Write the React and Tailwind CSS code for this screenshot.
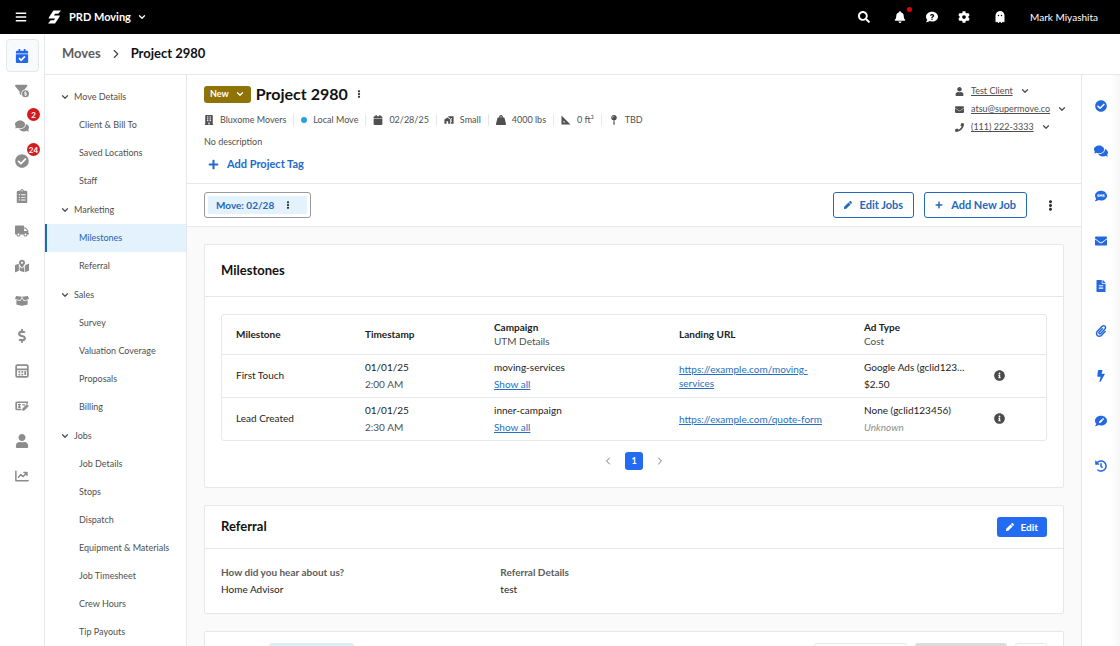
import clsx from 'clsx';
import {
  FaBars,
  FaBell,
  FaBolt,
  FaBoxOpen,
  FaBuilding,
  FaCalendar,
  FaCalendarCheck,
  FaCheckCircle,
  FaClipboardList,
  FaCog,
  FaComment,
  FaComments,
  FaDollarSign,
  FaEllipsisV,
  FaEnvelope,
  FaFileAlt,
  FaGhost,
  FaHistory,
  FaInfoCircle,
  FaMapMarkedAlt,
  FaMapPin,
  FaPaperclip,
  FaPen,
  FaPhone,
  FaPlus,
  FaQuestion,
  FaSearch,
  FaTruck,
  FaUser,
  FaWeightHanging,
} from 'react-icons/fa';
import { FaCommentSms, FaFilterCircleDollar } from 'react-icons/fa6';
import { FiChevronDown, FiChevronLeft, FiChevronRight } from 'react-icons/fi';
import { MdHomeWork } from 'react-icons/md';

function Logo() {
  return (
    <svg viewBox="0 0 24 26" className="h-[14px] w-[13px]" fill="currentColor" aria-hidden="true">
      <path d="M10 1h14l-5 6h-6l-2 3h11l-1 3-8 12H0l5-6h6l2-3H1l1-3z" />
    </svg>
  );
}

function CalculatorIcon({ className }) {
  return (
    <svg viewBox="0 0 24 24" className={className} fill="none" stroke="currentColor" strokeWidth="3" aria-hidden="true">
      <rect x="2" y="2" width="20" height="20" rx="2" />
      <path d="M2 9h20M6 13.5h3M11 13.5h3M6 18h3M11 18h3M17.5 12v7" />
    </svg>
  );
}

function MoneyCheckEditIcon({ className }) {
  return (
    <svg viewBox="0 0 24 20" className={className} fill="none" stroke="currentColor" strokeWidth="2.8" aria-hidden="true">
      <path d="M11 16H3.5A1.5 1.5 0 0 1 2 14.5V5A1.5 1.5 0 0 1 3.5 3.5H21V6" />
      <path d="M5 7.5h5M5 12h5M7.5 6v8M12.500 8h5" strokeWidth="2.2" />
      <path d="M13 17.5l.8-3.500L20.5 7.5l2.5 2.5-6.5 6.700z" fill="currentColor" strokeWidth="1.4" />
    </svg>
  );
}

function ChartIcon({ className }) {
  return (
    <svg viewBox="0 0 24 20" className={className} fill="none" stroke="currentColor" strokeWidth="2.6" strokeLinecap="round" strokeLinejoin="round" aria-hidden="true">
      <path d="M1.5 2v16h21" />
      <path d="M6 12l4-4.5 4 3.5 5.5-6M15.500 4h5v5" />
    </svg>
  );
}

function SetSquareIcon({ className }) {
  return (
    <svg viewBox="0 0 20 20" className={className} fill="currentColor" fillRule="evenodd" aria-hidden="true">
      <path d="M1 1l18 18H1zM5 11v4h4z" />
    </svg>
  );
}

function HelpIcon({ className }) {
  return (
    <span className={clsx('relative flex items-center justify-center', className)}>
      <FaComment className="size-full" />
      <FaQuestion className="absolute size-[6px] text-black" />
    </span>
  );
}

function CommentPenIcon({ className }) {
  return (
    <span className={clsx('relative flex items-center justify-center', className)}>
      <FaComment className="size-full" />
      <FaPen className="absolute size-[5px] text-white" />
    </span>
  );
}

const RAIL_ITEMS = [
  { label: 'Leads', icon: FaFilterCircleDollar },
  { label: 'Messages', icon: FaComments, badge: 2 },
  { label: 'Tasks', icon: FaCheckCircle, badge: 24 },
  { label: 'Estimates', icon: FaClipboardList },
  { label: 'Dispatch', icon: FaTruck },
  { label: 'Map', icon: FaMapMarkedAlt },
  { label: 'Storage', icon: FaBoxOpen },
  { label: 'Payments', icon: FaDollarSign },
  { label: 'Accounting', icon: CalculatorIcon },
  { label: 'Payroll', icon: MoneyCheckEditIcon },
  { label: 'Customers', icon: FaUser },
  { label: 'Reports', icon: ChartIcon },
];

const NAV_GROUPS = [
  { title: 'Move Details', items: ['Client & Bill To', 'Saved Locations', 'Staff'] },
  { title: 'Marketing', items: ['Milestones', 'Referral'] },
  { title: 'Sales', items: ['Survey', 'Valuation Coverage', 'Proposals', 'Billing'] },
  {
    title: 'Jobs',
    items: ['Job Details', 'Stops', 'Dispatch', 'Equipment & Materials', 'Job Timesheet', 'Crew Hours', 'Tip Payouts'],
  },
];

const FACTS = [
  { icon: FaBuilding, text: 'Bluxome Movers' },
  { text: 'Local Move' },
  { icon: FaCalendar, text: '02/28/25' },
  { icon: MdHomeWork, text: 'Small' },
  { icon: FaWeightHanging, text: '4000 lbs' },
  { icon: SetSquareIcon, text: '0 ft³' },
  { icon: FaMapPin, text: 'TBD' },
];

const CONTACTS = [
  { icon: FaUser, text: 'Test Client' },
  { icon: FaEnvelope, text: 'atsu@supermove.co' },
  { icon: FaPhone, text: '(111) 222-3333' },
];

const TOOLS = [
  { label: 'Tasks', icon: FaCheckCircle },
  { label: 'Conversations', icon: FaComments },
  { label: 'Text messages', icon: FaCommentSms },
  { label: 'Emails', icon: FaEnvelope },
  { label: 'Documents', icon: FaFileAlt },
  { label: 'Attachments', icon: FaPaperclip },
  { label: 'Automations', icon: FaBolt },
  { label: 'Notes', icon: CommentPenIcon },
  { label: 'History', icon: FaHistory },
];

const MILESTONES = [
  {
    name: 'First Touch',
    date: '01/01/25',
    time: '2:00 AM',
    campaign: 'moving-services',
    url: 'https://example.com/moving-services',
    adType: 'Google Ads (gclid123…',
    cost: '$2.50',
  },
  {
    name: 'Lead Created',
    date: '01/01/25',
    time: '2:30 AM',
    campaign: 'inner-campaign',
    url: 'https://example.com/quote-form',
    adType: 'None (gclid123456)',
    cost: null,
  },
];

function TopBar() {
  return (
    <header className="flex h-[34px] shrink-0 items-center bg-black pr-[22px] pl-[15px] text-white">
      <button aria-label="Menu">
        <FaBars className="size-3" />
      </button>
      <div className="ml-[21px] flex items-center gap-2">
        <Logo />
        <button className="flex items-center gap-1.5 text-[11px] font-bold">
          PRD Moving
          <FiChevronDown className="size-2.5" strokeWidth={3} />
        </button>
      </div>
      <div className="ml-auto flex items-center gap-5">
        <button aria-label="Search" className="mr-1">
          <FaSearch className="size-3" />
        </button>
        <button aria-label="Notifications" className="relative">
          <FaBell className="size-3" />
          <span className="absolute -top-1 -right-1.5 size-[5px] rounded-full bg-red-600" />
        </button>
        <button aria-label="Help">
          <HelpIcon className="size-3" />
        </button>
        <button aria-label="Settings">
          <FaCog className="size-3" />
        </button>
        <button aria-label="Updates" className="mx-1">
          <FaGhost className="size-3" />
        </button>
        <button className="text-[10px]">Mark Miyashita</button>
      </div>
    </header>
  );
}

function IconRail() {
  return (
    <nav aria-label="Main" className="flex w-[45px] shrink-0 flex-col items-center border-r border-gray-200 pt-1">
      <div className="flex h-[35px] items-center">
        <a
          href="#moves"
          aria-label="Moves"
          className="flex size-[33px] items-center justify-center rounded-sm border border-gray-200 bg-gray-50 text-[#2368e8]"
        >
          <FaCalendarCheck className="size-3.5" />
        </a>
      </div>
      {RAIL_ITEMS.map(({ label, icon: Icon, badge }) => (
        <a
          key={label}
          href="#rail"
          aria-label={label}
          className="relative flex h-[35px] w-full items-center justify-center text-[#8c8c8c]"
        >
          <Icon className="size-3.5" />
          {badge && (
            <span className="absolute top-0 right-1 flex h-[13px] min-w-[13px] items-center justify-center rounded-full bg-[#d31a1f] text-[8px] font-bold text-white">
              {badge}
            </span>
          )}
        </a>
      ))}
    </nav>
  );
}

function SideNav() {
  return (
    <nav
      aria-label="Project sections"
      className="w-[142px] shrink-0 space-y-px overflow-hidden border-r border-gray-200 pt-2 text-[9px] text-[#4f4f4f]"
    >
      {NAV_GROUPS.map((group) => (
        <div key={group.title}>
          <button className="flex h-7 w-full items-center gap-1 pl-[15px]">
            <FiChevronDown className="size-2.5" strokeWidth={3} />
            {group.title}
          </button>
          {group.items.map((item) => (
            <a
              key={item}
              href="#section"
              className={clsx(
                'flex h-7 items-center border-l-2 pl-8',
                item === 'Milestones'
                  ? 'border-[#1f68c0] bg-[#e3f2fd] text-[#1f62b0]'
                  : 'border-transparent'
              )}
            >
              {item}
            </a>
          ))}
        </div>
      ))}
    </nav>
  );
}

function ProjectHeader() {
  return (
    <section className="flex justify-between border-b border-gray-200 bg-white px-[17px] pt-[7px] pb-[5px]">
      <div>
        <div className="flex h-6 items-center gap-[5px]">
          <button className="flex h-[17px] items-center gap-1.5 rounded-[3px] bg-[#8f7306] px-1.5 text-[9px] font-bold text-white">
            New
            <FiChevronDown className="size-2.5" strokeWidth={3} />
          </button>
          <h1 className="text-base font-bold text-[#111]">Project 2980</h1>
          <button aria-label="Project actions" className="px-0.5">
            <FaEllipsisV className="size-2 text-[#333]" />
          </button>
        </div>
        <ul className="flex h-7 items-center divide-x divide-gray-200 text-[9px] text-[#4f4f4f]">
          {FACTS.map(({ icon: Icon, text }) => (
            <li key={text} className="flex h-3 items-center gap-1.5 px-[7px] first:pl-0">
              {Icon ? (
                <Icon className="size-2.5" />
              ) : (
                <span className="size-1.5 rounded-full bg-[#2a9fe0]" />
              )}
              {text}
            </li>
          ))}
        </ul>
        <p className="h-4 text-[9px] leading-4 text-[#4f4f4f]">No description</p>
        <button className="flex h-7 items-center gap-2 pl-1 text-[11px] font-bold text-[#2468cc]">
          <FaPlus className="size-[11px]" />
          Add Project Tag
        </button>
      </div>
      <ul className="w-[109px] text-[9px] text-[#4f4f4f]">
        {CONTACTS.map(({ icon: Icon, text }) => (
          <li key={text} className="flex h-[18px] items-center gap-[7px]">
            <Icon className="size-[9px] shrink-0" />
            <a href="#contact" className="underline">
              {text}
            </a>
            <FiChevronDown className="size-2.5 shrink-0" strokeWidth={3} />
          </li>
        ))}
      </ul>
    </section>
  );
}

function JobBar() {
  return (
    <section className="flex h-[43px] shrink-0 items-center border-b border-gray-200 bg-white px-[17px]">
      <div className="flex h-[26px] w-[107px] rounded-[3px] border border-[#9a9a9a] p-[3px]">
        <div className="flex flex-1 items-center gap-2.5 bg-[#e3f2fd] pl-2">
          <button className="text-[10px] font-bold text-[#2468b8]">Move: 02/28</button>
          <button aria-label="Move actions">
            <FaEllipsisV className="size-2 text-[#333]" />
          </button>
        </div>
      </div>
      <div className="ml-auto flex items-center gap-2.5 text-[11px] font-bold text-[#2468b8]">
        <button className="flex h-[26px] items-center gap-2 rounded-[3px] border border-[#2468b8] px-2.5">
          <FaPen className="size-2" />
          Edit Jobs
        </button>
        <button className="flex h-[26px] items-center gap-2 rounded-[3px] border border-[#2468b8] px-2.5">
          <FaPlus className="size-2" />
          Add New Job
        </button>
        <button aria-label="More actions" className="px-2">
          <FaEllipsisV className="size-[11px] text-[#333]" />
        </button>
      </div>
    </section>
  );
}

function MilestonesCard() {
  return (
    <section className="rounded-xs border border-gray-200 bg-white">
      <div className="flex h-[52px] items-center border-b border-gray-200 px-4">
        <h2 className="text-[13px] font-bold text-[#111]">Milestones</h2>
      </div>
      <div className="px-4 py-[17px]">
        <div className="rounded-[3px] border border-gray-200">
          <table className="w-full table-fixed text-left text-[10px] text-[#222]">
            <thead>
              <tr className="h-[39px] border-b border-gray-200 leading-[14px]">
                <th className="w-[129px] pl-3.5">Milestone</th>
                <th className="w-[129px] pl-3.5">Timestamp</th>
                <th className="w-[185px] pl-3.5">
                  Campaign
                  <span className="block font-normal text-[#4f4f4f]">UTM Details</span>
                </th>
                <th className="w-[185px] pl-3.5">Landing URL</th>
                <th className="pl-3.5">
                  Ad Type
                  <span className="block font-normal text-[#4f4f4f]">Cost</span>
                </th>
                <th aria-label="Info" className="w-[66px]" />
              </tr>
            </thead>
            <tbody className="divide-y divide-gray-200">
              {MILESTONES.map((row) => (
                <tr key={row.name} className="h-[43px] leading-[17px]">
                  <td className="pl-3.5">{row.name}</td>
                  <td className="pl-3.5">
                    {row.date}
                    <span className="block text-[#4f4f4f]">{row.time}</span>
                  </td>
                  <td className="pl-3.5">
                    <div>{row.campaign}</div>
                    <a href="#utm" className="text-[#2470c4] underline">
                      Show all
                    </a>
                  </td>
                  <td className="pr-3.5 pl-3.5 leading-[14px]">
                    <a href="#landing" className="text-[#2470c4] underline">
                      {row.url}
                    </a>
                  </td>
                  <td className="pr-1 pl-3.5">
                    <div className="truncate">{row.adType}</div>
                    {row.cost ? (
                      <div>{row.cost}</div>
                    ) : (
                      <div className="text-[#8c8c8c] italic">Unknown</div>
                    )}
                  </td>
                  <td className="pl-3.5">
                    <FaInfoCircle className="size-[11px] text-[#4a4a4a]" />
                  </td>
                </tr>
              ))}
            </tbody>
          </table>
        </div>
        <div className="flex items-center justify-center gap-[11px] pt-[11px] text-[#777]">
          <button aria-label="Previous page">
            <FiChevronLeft className="size-3" />
          </button>
          <button className="size-[18px] rounded-[3px] bg-[#236bf0] text-[9px] font-bold text-white">1</button>
          <button aria-label="Next page">
            <FiChevronRight className="size-3" />
          </button>
        </div>
      </div>
    </section>
  );
}

function ReferralCard() {
  return (
    <section className="rounded-xs border border-gray-200 bg-white">
      <div className="flex h-[43px] items-center justify-between border-b border-gray-200 px-4">
        <h2 className="text-[13px] font-bold text-[#111]">Referral</h2>
        <button className="flex h-5 items-center gap-1.5 rounded-[3px] bg-[#236bf0] px-[9px] text-[10px] font-bold text-white">
          <FaPen className="size-2" />
          Edit
        </button>
      </div>
      <dl className="grid grid-cols-3 gap-3 px-4 py-[15px] text-[10px] leading-[17px] text-[#222]">
        <div>
          <dt className="font-bold text-[#5c5c5c]">How did you hear about us?</dt>
          <dd>Home Advisor</dd>
        </div>
        <div>
          <dt className="font-bold text-[#5c5c5c]">Referral Details</dt>
          <dd>test</dd>
        </div>
      </dl>
    </section>
  );
}

// Next card in the scroll area, only its top edge is above the fold
function SurveyCard() {
  return (
    <section className="flex items-start gap-2 rounded-xs border border-gray-200 bg-white px-4 py-[11px]">
      <span className="ml-12 h-5 w-[85px] rounded-[3px] bg-[#d8f0f8]" />
      <button aria-label="Copy survey" className="ml-auto h-6 w-[93px] rounded-[3px] border border-gray-200" />
      <button aria-label="Send survey" className="h-6 w-[92px] rounded-[3px] bg-[#dcdcdc]" />
      <button aria-label="Survey actions" className="h-6 w-8 rounded-[3px] border border-gray-200" />
    </section>
  );
}

function ToolRail() {
  return (
    <aside className="flex w-[39px] shrink-0 flex-col items-center border-l border-gray-200 bg-linear-to-r from-white from-75% to-[#f7f7f7] pt-2 text-[#2368e0]">
      {TOOLS.map(({ label, icon: Icon }) => (
        <button key={label} aria-label={label} className="flex h-[45px] items-center">
          <Icon className={clsx(label === 'Conversations' ? 'size-3.5' : 'size-3')} />
        </button>
      ))}
    </aside>
  );
}

export default function App() {
  return (
    <div className="flex h-screen flex-col overflow-hidden bg-white font-['Lato',sans-serif]">
      <TopBar />
      <div className="flex min-h-0 flex-1">
        <IconRail />
        <div className="flex min-w-0 flex-1 flex-col">
          <div className="flex h-[41px] shrink-0 items-center gap-2 border-b border-gray-200 pl-[17px] text-[13px] font-bold">
            <a href="#moves" className="text-[#5c5c5c]">
              Moves
            </a>
            <FiChevronRight className="size-3.5 text-[#444]" />
            <span className="text-[#111]">Project 2980</span>
          </div>
          <div className="flex min-h-0 flex-1">
            <SideNav />
            <main className="flex min-w-0 flex-1 flex-col">
              <ProjectHeader />
              <JobBar />
              <div className="min-h-0 flex-1 space-y-[17px] overflow-hidden bg-[#fafafa] p-[17px]">
                <MilestonesCard />
                <ReferralCard />
                <SurveyCard />
              </div>
            </main>
            <ToolRail />
          </div>
        </div>
      </div>
    </div>
  );
}
